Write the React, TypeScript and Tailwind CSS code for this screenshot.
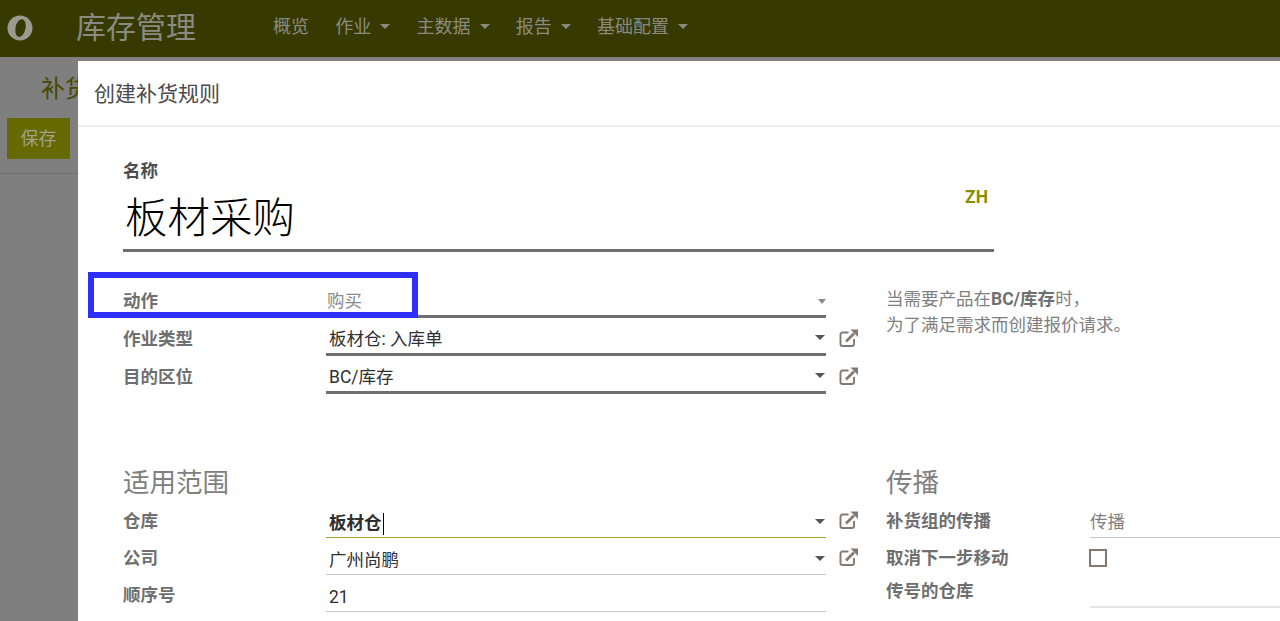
const menus = [
  { name: "概览", caret: false },
  { name: "作业", caret: true },
  { name: "主数据", caret: true },
  { name: "报告", caret: true },
  { name: "基础配置", caret: true },
];

function Caret({ className }: { className: string }) {
  return <span className={"inline-block h-0 w-0 border-t-[5px] border-x-transparent " + className} />;
}

// fa-external-link, drawn because the lucide one is too thin
function OpenLink() {
  return (
    <svg viewBox="0 0 20 20" className="ml-[13px] mt-[9px] h-[20px] w-[20px] shrink-0 text-[#85796f]">
      <path
        d="M9.5 4.500H3.500C2.400 4.500 1.500 5.400 1.500 6.500V16C1.500 17.100 2.400 18 3.500 18H13C14.100 18 15 17.100 15 16V11"
        fill="none"
        stroke="currentColor"
        strokeWidth="1.9"
      />
      <path d="M7 13.500L15 5.500" fill="none" stroke="currentColor" strokeWidth="2.6" />
      <path d="M11.500 1.500H19V9Z" fill="currentColor" />
    </svg>
  );
}

function Field({
  label,
  value,
  line,
  muted = false,
  bold = false,
  link = true,
  caret = true,
}: {
  label: string;
  value: string;
  line: string;
  muted?: boolean;
  bold?: boolean;
  link?: boolean;
  caret?: boolean;
}) {
  return (
    <div className="flex h-[37px]">
      <div className="w-[203px] pt-[7px] text-[17.5px] font-bold leading-[26px] text-[#6f6f6f]">{label}</div>
      <div className={"flex w-[500px] items-end justify-between pb-px " + (muted ? "pl-px pr-0 " : "pl-[3px] pr-[1px] ") + line}>
        <span className={"text-[17.5px] leading-[26px] " + (muted ? "text-[#8a8a8a]" : "text-[#2f2f2f]") + (bold ? " font-bold text-[#1c1c1c]" : "")}>
          {value}
          {bold && <span className="ml-px inline-block h-[22px] w-px bg-black align-middle" />}
        </span>
        {caret && (
          <Caret className={muted ? "mb-[10px] border-x-[4px] border-t-[#8a8a8a]" : "mb-[12px] border-x-[5px] border-t-[#555]"} />
        )}
      </div>
      {link && <OpenLink />}
    </div>
  );
}

export default function App() {
  return (
    <div className="relative h-[621px] w-[1280px] overflow-hidden bg-[#7f7f7f] font-['Roboto','Noto_Sans_CJK_SC',sans-serif]">
      <nav className="flex h-[57px] items-center bg-[#363a00] pl-[7px]">
        <svg viewBox="0 0 26 26" className="mb-[1px] h-[26px] w-[26px]">
          <circle cx="13" cy="13" r="12.5" fill="#9a9a90" />
          <ellipse cx="13.5" cy="13" rx="5" ry="9" fill="#363a00" transform="rotate(12 13.500 13)" />
        </svg>
        <span className="mb-[2px] ml-[43px] text-[30px] leading-none text-[#8a8a80]">库存管理</span>
        <div className="mb-[4px] ml-[77px] flex items-center gap-[26.25px]">
          {menus.map((m) => (
            <span key={m.name} className="flex items-center gap-[9px] text-[18px] text-[#8a8a80]">
              {m.name}
              {m.caret && <Caret className="border-x-[5px] border-t-[#8a8a80]" />}
            </span>
          ))}
        </div>
      </nav>
      <div className="h-[117px] border-b border-[#6f6f6f] pl-[7px]">
        <div className="pl-[34px] pt-[14px] text-[24px] leading-[36px] text-[#464a00]">补货</div>
        <button className="mt-[11px] h-[41px] w-[63px] bg-[#666800] text-[18px] text-[#a0a090]">保存</button>
      </div>

      {/* dialog */}
      <div className="absolute bottom-0 left-[78px] right-0 top-[61px] bg-white">
        <header className="flex h-[66px] items-center border-b-2 border-[#eeeeee] pl-[16px] pt-[3px] text-[21px] text-[#4a4a4a]">
          创建补货规则
        </header>
        <div className="pl-[45px] pt-[31px]">
          <div className="text-[17.5px] font-bold leading-[26px] text-[#4d4d4d]">名称</div>
          <div className="relative h-[68px] w-[871px] border-b-[3px] border-[#6f6f6f] pl-[2px] pt-[5px] text-[42.5px] font-light leading-[60px] text-black">
            板材采购
            <span className="absolute right-[6px] top-0 text-[17.5px] font-bold leading-[26px] text-[#8b9000]">ZH</span>
          </div>

          <div className="mt-[29px] flex">
            <div className="w-[763px] shrink-0">
              <Field label="动作" value="购买" line="border-b-[3px] border-[#6f6f6f]" muted link={false} />
              <div className="h-px" />
              <Field label="作业类型" value="板材仓: 入库单" line="border-b-[3px] border-[#6f6f6f]" />
              <div className="h-px" />
              <Field label="目的区位" value="BC/库存" line="border-b-[3px] border-[#6f6f6f]" />
            </div>
            <p className="pt-[5px] text-[17.5px] leading-[26px] text-[#808080]">
              当需要产品在<b className="text-[#6f6f6f]">BC/库存</b>时，
              <br />
              为了满足需求而创建报价请求。
            </p>
          </div>

          <div className="mt-[71px] flex">
            <div className="w-[763px] shrink-0">
              <h2 className="text-[26.5px] leading-[36px] text-[#808080]">适用范围</h2>
              <Field label="仓库" value="板材仓" line="border-b border-[#a3a62a]" bold />
              <Field label="公司" value="广州尚鹏" line="border-b border-[#c8c8c8]" />
              <Field label="顺序号" value="21" line="border-b border-[#c8c8c8]" link={false} caret={false} />
            </div>
            <div className="flex-1">
              <h2 className="text-[26.5px] leading-[36px] text-[#808080]">传播</h2>
              <div className="flex h-[37px]">
                <div className="w-[204px] pt-[7px] text-[17.5px] font-bold leading-[26px] text-[#6f6f6f]">补货组的传播</div>
                <div className="flex-1 border-b border-[#c8c8c8] pt-[8px] text-[17.5px] leading-[26px] text-[#808080]">传播</div>
              </div>
              <div className="flex h-[34px]">
                <div className="w-[204px] pt-[7px] text-[17.5px] font-bold leading-[26px] text-[#6f6f6f]">取消下一步移动</div>
                <div className="ml-[-1px] mt-[11px] h-[18px] w-[18px] border-2 border-[#85796f]" />
              </div>
              <div className="flex h-[36px]">
                <div className="w-[204px] pt-[6px] text-[17.5px] font-bold leading-[26px] text-[#6f6f6f]">传号的仓库</div>
                <div className="flex-1 border-b-2 border-[#e4e4e4]" />
              </div>
            </div>
          </div>
        </div>
      </div>

      {/* annotation drawn on the screenshot */}
      <div className="absolute left-[88px] top-[272px] h-[46px] w-[330px] border-[6px] border-[#2f2ffa]" />
    </div>
  );
}
